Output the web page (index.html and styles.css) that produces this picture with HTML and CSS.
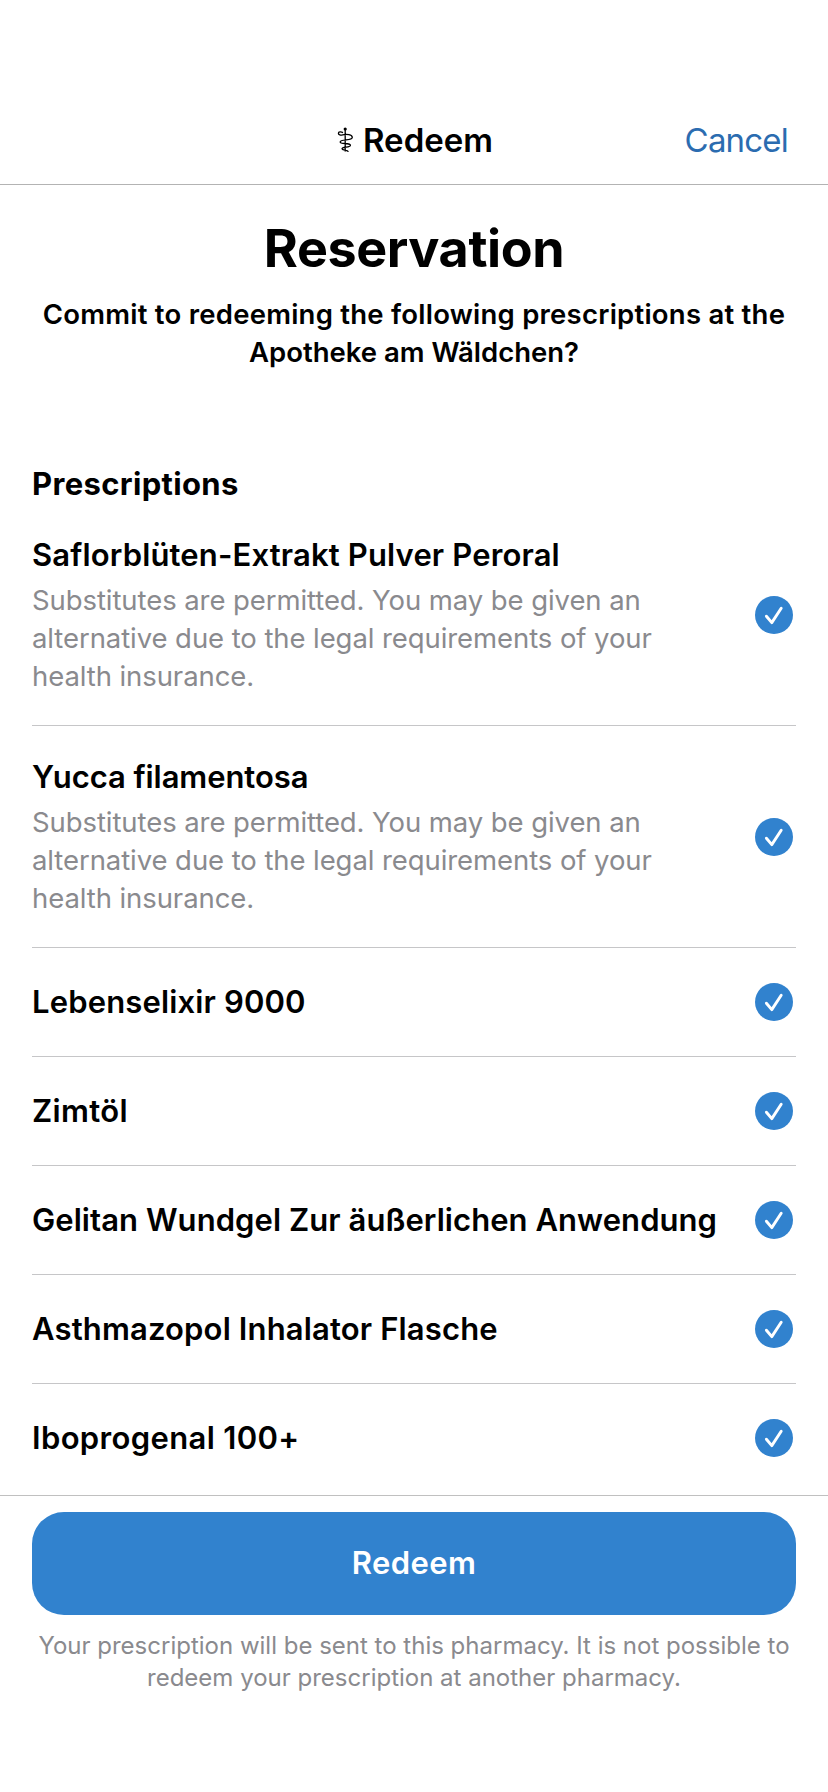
FILE: index.html
```
<!DOCTYPE html>
<html lang="en">
<head>
<meta charset="utf-8">
<title>Redeem</title>
<link rel="stylesheet" href="styles.css">
</head>
<body>
<svg class="symbols" aria-hidden="true">
  <symbol id="check" viewBox="0 0 38 38">
    <circle cx="19" cy="19" r="19" fill="#3182ce"/>
    <path d="M11.4 20.2 16.8 26.6 26.2 12.3" fill="none" stroke="#fff" stroke-width="2.9" stroke-linecap="round" stroke-linejoin="round"/>
  </symbol>
</svg>
<header class="navbar">
  <span></span>
  <h1 class="navbar-title">
    <svg class="staff" viewBox="0 0 16 26" aria-hidden="true">
      <circle cx="8.2" cy="2" r="1.6"/>
      <path d="M8.2 3V24.5M5.6 7.8C3.6 8.4 1.4 8 1.4 6.3 1.4 4.6 4 4.6 6 5.6M5.6 7.8C9.5 6.8 15.3 7.6 15.3 10.4 15.3 14 3.2 11.6 3.2 14.9 3.2 17.8 13.4 15.2 13.4 18.3 13.4 21 5 19.4 5 21.8 5 23.6 10.6 22.4 11.4 24.8"/>
    </svg>
    <span>Redeem</span>
  </h1>
  <a class="cancel">Cancel</a>
</header>
<main class="content">
  <h2 class="heading">Reservation</h2>
  <p class="lead"><span class="lead-first">Commit to redeeming the following prescriptions at the</span><br>Apotheke am Wäldchen?</p>
  <h3 class="section-title">Prescriptions</h3>
  <ul class="list">
    <li class="item detailed">
      <div><p class="name">Saflorblüten-Extrakt Pulver Peroral</p>
      <p class="note">Substitutes are permitted. You may be given an<br>alternative due to the legal requirements of your<br>health insurance.</p></div>
      <svg class="check"><use href="#check"/></svg>
    </li>
    <li class="item detailed">
      <div><p class="name snug">Yucca filamentosa</p>
      <p class="note">Substitutes are permitted. You may be given an<br>alternative due to the legal requirements of your<br>health insurance.</p></div>
      <svg class="check"><use href="#check"/></svg>
    </li>
    <li class="item"><p class="name">Lebenselixir 9000</p><svg class="check"><use href="#check"/></svg></li>
    <li class="item"><p class="name wide">Zimtöl</p><svg class="check"><use href="#check"/></svg></li>
    <li class="item"><p class="name regular">Gelitan Wundgel Zur äußerlichen Anwendung</p><svg class="check"><use href="#check"/></svg></li>
    <li class="item"><p class="name">Asthmazopol Inhalator Flasche</p><svg class="check"><use href="#check"/></svg></li>
    <li class="item"><p class="name wide">Iboprogenal 100+</p><svg class="check"><use href="#check"/></svg></li>
  </ul>
</main>
<footer class="footer">
  <button class="redeem">Redeem</button>
  <p class="disclaimer">Your prescription will be sent to this pharmacy. It is not possible to<br>redeem your prescription at another pharmacy.</p>
</footer>
</body>
</html>
```
FILE: styles.css
```
* {
  box-sizing: border-box;
  margin: 0;
  padding: 0;
}

body {
  display: flex;
  flex-direction: column;
  height: 1792px;
  overflow: hidden;
  background: #fff;
  color: #000;
  font-family: Inter, "Liberation Sans", sans-serif;
}

.symbols {
  display: block;
  width: 0;
  height: 0;
}

.navbar {
  display: grid;
  grid-template-columns: 1fr auto 1fr;
  align-items: start;
  height: 185px;
  padding: 120px 40px 0 42px;
  border-bottom: 1px solid #b3b3b3;
  font-size: 33px;
  line-height: 40px;
}

.navbar-title {
  display: flex;
  gap: 10px;
  font-size: 33px;
  font-weight: 600;
}

.staff {
  width: 16px;
  height: 26px;
  margin-top: 7px;
  fill: #000;
}

.staff path {
  fill: none;
  stroke: #000;
  stroke-width: 1.3;
}

.cancel {
  justify-self: end;
  color: #2b6cb0;
  letter-spacing: -0.8px;
}

.content {
  height: 1310px;
  padding: 34px 32px 0;
  overflow: hidden;
}

.heading {
  font-size: 52px;
  font-weight: 700;
  line-height: 60px;
  letter-spacing: -0.4px;
  text-align: center;
}

.lead {
  margin-top: 16px;
  font-size: 27.5px;
  font-weight: 600;
  line-height: 38px;
  text-align: center;
}

.lead-first {
  letter-spacing: 0.24px;
}

.section-title {
  margin: 94px 0 1px;
  font-size: 31px;
  font-weight: 700;
  line-height: 38px;
  letter-spacing: 0.34px;
}

.list {
  list-style: none;
}

.item {
  display: flex;
  align-items: center;
  justify-content: space-between;
  height: 109px;
  padding-right: 3px;
  border-bottom: 1px solid #c6c6c8;
}

.item:last-child {
  border-bottom-color: transparent;
}

.detailed {
  height: 222px;
  padding-top: 2px;
}

.name {
  font-size: 31px;
  font-weight: 600;
  line-height: 38px;
  letter-spacing: 0.15px;
  white-space: nowrap;
}

.snug {
  letter-spacing: -0.08px;
}

.regular {
  letter-spacing: 0.06px;
}

.wide {
  letter-spacing: 0.35px;
}

.note {
  margin-top: 7px;
  color: #8a8a8e;
  font-size: 27.5px;
  line-height: 38px;
  letter-spacing: -0.08px;
}

.check {
  flex: none;
  width: 38px;
  height: 38px;
}

.detailed .check {
  margin-bottom: 2px;
}

.footer {
  flex: 1;
  padding: 16px 32px 0;
  border-top: 1px solid #c0c0c0;
}

.redeem {
  display: block;
  width: 100%;
  height: 103px;
  padding-bottom: 1px;
  border: 0;
  border-radius: 32px;
  background: #3182ce;
  color: #fff;
  font: 600 31px/38px Inter, "Liberation Sans", sans-serif;
  letter-spacing: 0.4px;
}

.disclaimer {
  margin-top: 15px;
  color: #8a8a8e;
  font-size: 24px;
  line-height: 32px;
  text-align: center;
}
```
